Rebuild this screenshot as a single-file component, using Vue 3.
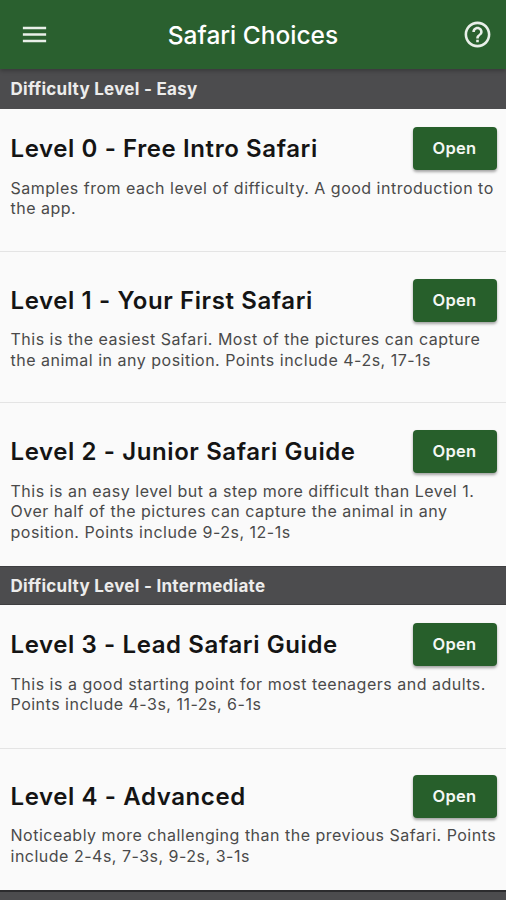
<script setup>
const sections = [
  {
    title: 'Difficulty Level - Easy',
    levels: [
      { name: 'Level 0 - Free Intro Safari', lines: ['Samples from each level of difficulty. A good introduction to', 'the app.'] },
      { name: 'Level 1 - Your First Safari', lines: ['This is the easiest Safari. Most of the pictures can capture', 'the animal in any position. Points include 4-2s, 17-1s'] },
      { name: 'Level 2 - Junior Safari Guide', lines: ['This is an easy level but a step more difficult than Level 1.', 'Over half of the pictures can capture the animal in any', 'position. Points include 9-2s, 12-1s'] },
    ],
  },
  {
    title: 'Difficulty Level - Intermediate',
    levels: [
      { name: 'Level 3 - Lead Safari Guide', lines: ['This is a good starting point for most teenagers and adults.', 'Points include 4-3s, 11-2s, 6-1s'] },
      { name: 'Level 4 - Advanced', lines: ['Noticeably more challenging than the previous Safari. Points', 'include 2-4s, 7-3s, 9-2s, 3-1s'] },
    ],
  },
]
</script>

<template>
  <div class="screen">
    <header class="appbar">
      <button class="icon" aria-label="Menu">
        <svg width="31" height="31" viewBox="0 0 24 24" fill="currentColor"><path d="M3 18h18v-2H3v2zm0-5h18v-2H3v2zm0-7v2h18V6H3z" /></svg>
      </button>
      <h1>Safari Choices</h1>
      <button class="icon" aria-label="Help">
        <svg width="31" height="31" viewBox="0 0 24 24" fill="currentColor"><path d="M11 18h2v-2h-2v2zm1-16C6.48 2 2 6.48 2 12s4.48 10 10 10 10-4.48 10-10S17.52 2 12 2zm0 18c-4.41 0-8-3.59-8-8s3.59-8 8-8 8 3.59 8 8-3.59 8-8 8zm0-14c-2.21 0-4 1.79-4 4h2c0-1.1.9-2 2-2s2 .9 2 2c0 2-3 1.75-3 5h2c0-2.25 3-2.5 3-5 0-2.21-1.79-4-4-4z" /></svg>
      </button>
    </header>
    <section v-for="s in sections" :key="s.title">
      <h2 class="bar">{{ s.title }}</h2>
      <article v-for="l in s.levels" :key="l.name" class="level">
        <div class="head">
          <h3>{{ l.name }}</h3>
          <button class="open">Open</button>
        </div>
        <p><span v-for="t in l.lines" :key="t">{{ t }}</span></p>
      </article>
    </section>
    <div class="bar next"></div>
  </div>
</template>

<style>
body { margin: 0; overflow: hidden; }
</style>

<style scoped>
.screen {
  width: 506px;
  height: 900px;
  overflow: hidden;
  background: #fafafa;
  font-family: Inter, "Liberation Sans", sans-serif;
}
.appbar {
  position: relative;
  box-sizing: border-box;
  height: 69px;
  padding: 0 13px 0 19px;
  display: flex;
  align-items: center;
  justify-content: space-between;
  background: #2a602f;
  color: #fff;
  box-shadow: 0 2px 4px rgba(0, 0, 0, 0.25);
}
h1 { margin: 0 6px 0 0; font-size: 24.5px; font-weight: 500; letter-spacing: 0; }
.icon {
  display: flex;
  padding: 0;
  border: 0;
  background: none;
  color: #e9efe9;
}
.bar {
  box-sizing: border-box;
  height: 40px;
  margin: 0;
  padding: 0 10.5px;
  background: #4c4c4e;
  color: #ececec;
  font-size: 17px;
  font-weight: 700;
  line-height: 40px;
  letter-spacing: 0.27px;
}
section + section .bar { height: 39px; border-top: 1px solid #3e3e40; border-bottom: 1px solid #3e3e40; line-height: 38px; }
.next { border-top: 2px solid #2c2c2e; }
.level {
  box-sizing: border-box;
  height: 151.5px;
  padding: 27px 9px 0 10.5px;
  border-bottom: 1.5px solid #e4e4e4;
}
.level:first-of-type { height: 142.5px; padding-top: 18px; }
.level:last-child { border: 0; height: 142px; }
section:first-of-type .level:last-child { height: 163px; }
section + section .level:first-of-type { height: 143.5px; }
section + section .level:last-child { height: 141.5px; padding-top: 26px; }
.head {
  display: flex;
  align-items: center;
  justify-content: space-between;
  height: 43px;
}
h3 { margin: 0; color: #141414; font-size: 24px; font-weight: 600; letter-spacing: 0.6px; white-space: nowrap; }
.open {
  width: 84px;
  height: 43px;
  padding: 0 1px 1px 0;
  border: 0;
  border-radius: 4px;
  background: #275f2b;
  color: #f4f7f4;
  font: 600 16.5px Inter, sans-serif;
  letter-spacing: 0.3px;
  box-shadow: 0 2px 3px rgba(0, 0, 0, 0.35);
}
p { margin: 7.6px 0 0; color: #4a4a4a; font-size: 16px; line-height: 20.8px; letter-spacing: 0.5px; }
p span { display: block; white-space: nowrap; }
</style>
